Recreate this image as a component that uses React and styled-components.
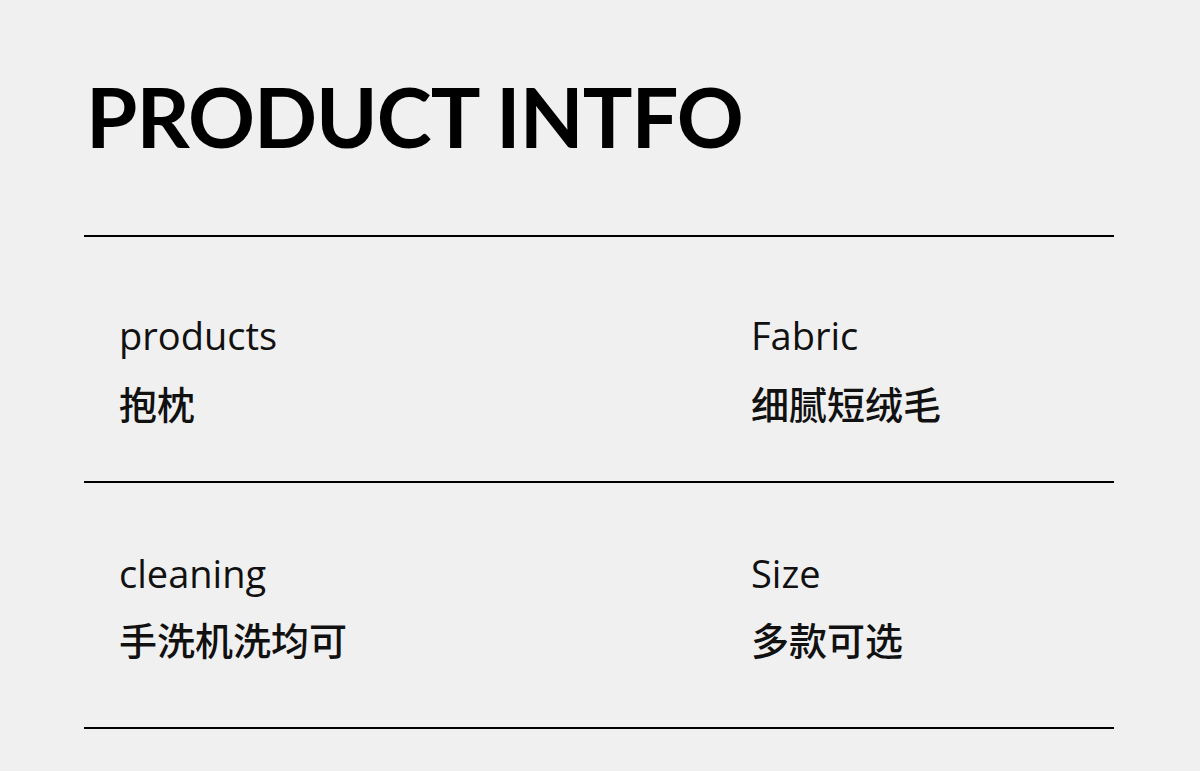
import React from "react"
import styled, { createGlobalStyle } from "styled-components"

const GlobalStyle = createGlobalStyle`
    html, body {
        margin: 0;
        padding: 0;
        background: #f0f0f0;
    }
`

const Page = styled.div`
    width: 1200px;
    height: 771px;
    background: #f0f0f0;
    box-sizing: border-box;
    padding: 0 86px 0 84px;
    overflow: hidden;
`

const Title = styled.h1`
    margin: 0;
    height: 235px;
    box-sizing: border-box;
    padding-top: 75px;
    padding-left: 2px;
    font-family: "Lato", "Liberation Sans", sans-serif;
    font-weight: 700;
    font-size: 83px;
    line-height: 1;
    letter-spacing: -1px;
    color: #000;
`

const Table = styled.div`
    border-top: 2px solid #000;
`

const Row = styled.div`
    display: grid;
    grid-template-columns: 632px 1fr;
    height: 246px;
    box-sizing: border-box;
    padding: ${(p) => p.top}px 0 0 35px;
    border-bottom: 2px solid #000;
`

const Cell = styled.div`
    display: flex;
    flex-direction: column;
`

const Label = styled.div`
    font-family: "Open Sans", "Noto Sans", sans-serif;
    font-weight: 400;
    font-size: 38px;
    line-height: 52px;
    color: #111;
`

const Value = styled.div`
    margin-top: ${(p) => p.gap}px;
    font-family: "Noto Sans CJK SC", sans-serif;
    font-weight: 500;
    font-size: 38px;
    line-height: 44px;
    color: #111;
`

const rows = [
    { top: 72, gap: 20, items: [{ label: "products", value: "抱枕" }, { label: "Fabric", value: "细腻短绒毛" }] },
    { top: 64, gap: 18, items: [{ label: "cleaning", value: "手洗机洗均可" }, { label: "Size", value: "多款可选" }] },
]

const App = () => {
    return (
        <Page>
            <GlobalStyle />
            <Title>PRODUCT INTFO</Title>
            <Table>
                {rows.map((row, i) => (
                    <Row key={i} top={row.top}>
                        {row.items.map((item) => (
                            <Cell key={item.label}>
                                <Label>{item.label}</Label>
                                <Value gap={row.gap}>{item.value}</Value>
                            </Cell>
                        ))}
                    </Row>
                ))}
            </Table>
        </Page>
    )
}

export default App
